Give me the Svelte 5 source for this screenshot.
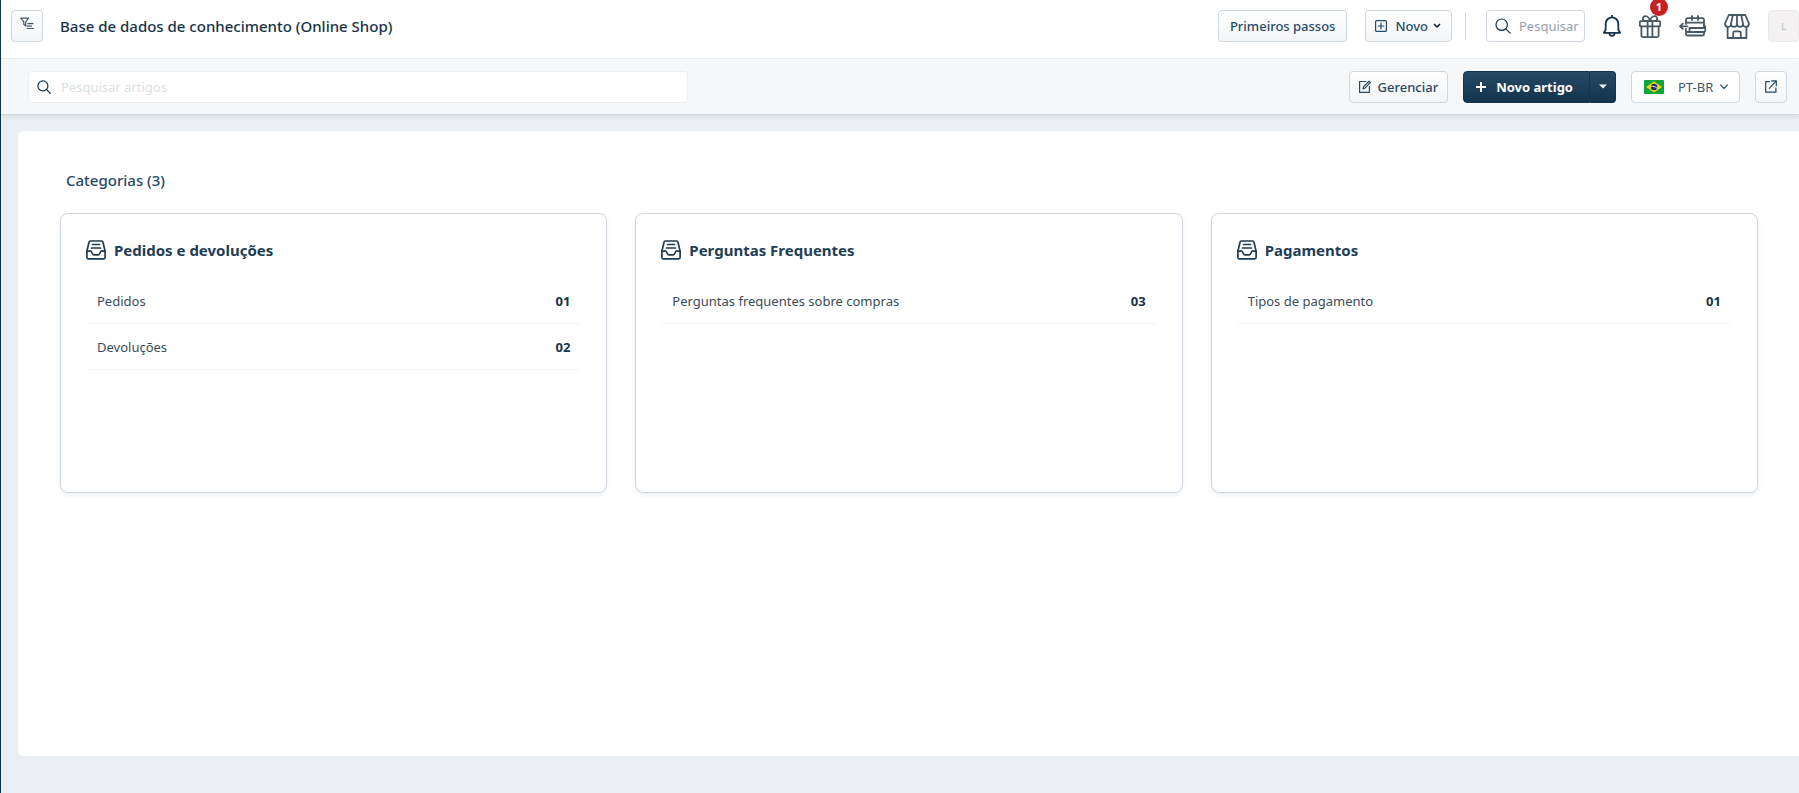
<script lang="ts">
	const categories = [
		{
			name: "Pedidos e devoluções",
			folders: [
				{ name: "Pedidos", count: 1 },
				{ name: "Devoluções", count: 2 }
			]
		},
		{
			name: "Perguntas Frequentes",
			folders: [{ name: "Perguntas frequentes sobre compras", count: 3 }]
		},
		{
			name: "Pagamentos",
			folders: [{ name: "Tipos de pagamento", count: 1 }]
		}
	];

	let search = $state("");
	let articleSearch = $state("");
	let language = $state("pt-BR");

	function pad(count: number) {
		return String(count).padStart(2, "0");
	}
</script>

<div class="app">
	<header class="header">
		<button class="btn square filter" type="button" aria-label="Filtros">
			<svg width="14" height="13" viewBox="0 0 14 13">
				<path d="M.7 1.1h7.8L5.7 4.8V9L3.8 7.6V4.8z" />
				<path d="M7.8 6.7H13M7 9.1h4.5M7 11.5h6.5" />
			</svg>
		</button>
		<h1>Base de dados de conhecimento (Online Shop)</h1>
		<div class="actions">
			<button class="btn" type="button">Primeiros passos</button>
			<button class="btn new" type="button">
				<svg width="12" height="12" viewBox="0 0 12 12">
					<rect x=".6" y=".6" width="10.8" height="10.8" rx="1" />
					<path d="M6 3.2v5.6M3.2 6h5.6" />
				</svg>
				Novo
				<svg class="caret" width="8" height="6" viewBox="0 0 8 6">
					<path d="M1.5 1.5L4 4l2.5-2.5" />
				</svg>
			</button>
			<span class="divider"></span>
			<label class="search small">
				<svg width="16" height="16" viewBox="0 0 16 16">
					<circle cx="6.7" cy="6.7" r="5.7" />
					<path d="M10.8 10.8l4.4 4.4" />
				</svg>
				<input type="text" placeholder="Pesquisar" aria-label="Pesquisar" bind:value={search} />
			</label>
			<button class="icon-btn dark" type="button" aria-label="Notificações">
				<svg width="18" height="22" viewBox="0 0 18 22">
					<path d="M9 .6v1.6M2.7 14.8V8.7a6.3 6.3 0 0 1 12.6 0v6.1l1.8 3H.9z" />
					<path d="M6.3 18.2c.4 3.6 5 3.6 5.4 0" />
				</svg>
			</button>
			<button class="icon-btn" type="button" aria-label="Novidades">
				<svg width="22" height="23" viewBox="0 0 22 23">
					<rect x=".8" y="6.2" width="20.4" height="5.2" rx="1.2" />
					<path d="M2.4 11.4v8.9a1.8 1.8 0 0 0 1.8 1.8h13.6a1.8 1.8 0 0 0 1.8-1.8v-8.9M8.6 6.2v15.9M13.4 6.2v15.9" />
					<path d="M10.6 6.2H6.4C3 6.2 3 1.2 6.2 1.2c2.6 0 4.4 2.2 4.4 5zM11.4 6.2h4.2c3.4 0 3.4-5 .2-5-2.6 0-4.4 2.2-4.4 5z" />
				</svg>
				<span class="badge">1</span>
			</button>
			<button class="icon-btn" type="button" aria-label="Agenda">
				<svg width="27" height="22" viewBox="0 0 27 22">
					<path d="M7 9V5a1.8 1.8 0 0 1 1.8-1.8h14.4A1.8 1.8 0 0 1 25 5v8M7 7.7h18M13 1v4M19 1v4" />
					<path d="M7 14v4.7a1.8 1.8 0 0 0 1.8 1.8h14.4a1.8 1.8 0 0 0 1.8-1.8V17" />
					<path d="M25 10c1.8 1.5 1.8 5.5.5 7h-18M25 13H10.5v4" />
					<path d="M8.5 11.3H1M3.8 8.7L1 11.3l2.8 2.6" />
				</svg>
			</button>
			<button class="icon-btn" type="button" aria-label="Loja">
				<svg width="26" height="25" viewBox="0 0 26 25">
					<path d="M4.8 1h16.4L25 9.500c0 4.400-5.900 4.400-6 .3 0 4.200-6 4.200-6 0 0 4.200-6 4.200-6 0-.1 4.100-6 4.100-6-.3zM8.800 1L7 9.800M13 1v8.800M17.200 1L19 9.800" />
					<path d="M3.600 13v11h18.800V13M9.200 24v-5.200a1.500 1.500 0 0 1 1.500-1.500h4.600a1.500 1.500 0 0 1 1.500 1.500V24" />
				</svg>
			</button>
			<button class="avatar" type="button">L</button>
		</div>
	</header>

	<div class="toolbar">
		<label class="search articles">
			<svg width="14" height="14" viewBox="0 0 14 14">
				<circle cx="5.9" cy="5.9" r="5" />
				<path d="M9.5 9.5l3.8 3.8" />
			</svg>
			<input
				type="text"
				placeholder="Pesquisar artigos"
				aria-label="Pesquisar artigos"
				bind:value={articleSearch}
			/>
		</label>
		<div class="tools">
			<button class="btn manage" type="button">
				<svg width="12" height="13" viewBox="0 0 12 13">
					<path d="M7 1.5H.6v10.9h9.8V6.5" />
					<path d="M4 9l.5-2.2L10 1.2l1.4 1.3-5.5 5.7z" />
				</svg>
				Gerenciar
			</button>
			<div class="split">
				<button class="primary" type="button">
					<svg width="10" height="10" viewBox="0 0 10 10">
						<path d="M5 0v10M0 5h10" />
					</svg>
					Novo artigo
				</button>
				<button class="primary more" type="button" aria-label="Mais opções">
					<svg width="8" height="5" viewBox="0 0 8 5"><path d="M0 .5h8l-4 4z" /></svg>
				</button>
			</div>
			<label class="language">
				<svg class="flag" width="20" height="14" viewBox="0 0 20 14">
					<rect width="20" height="14" rx="1" fill="#0ba53b" />
					<path d="M10 1.5L18 7l-8 5.5L2 7z" fill="#f5d713" />
					<circle cx="10" cy="7" r="3.2" fill="#1a2f73" />
					<path d="M7 6.2c2.2-.3 4.3.3 5.9 1.9" fill="none" stroke="#fff" stroke-width=".9" />
				</svg>
				<select aria-label="Idioma" bind:value={language}>
					<option value="pt-BR">PT-BR</option>
				</select>
				<svg class="caret" width="8" height="6" viewBox="0 0 8 6">
					<path d="M.7 1L4 4.5 7.3 1" />
				</svg>
			</label>
			<button class="btn square" type="button" aria-label="Abrir portal">
				<svg width="12" height="13" viewBox="0 0 12 13">
					<path d="M4.5 1.6H.7v10.6h10.2V8M6.5.9h4.8v4.8M11 1.2L4.3 8.4" />
				</svg>
			</button>
		</div>
	</div>

	<main class="panel">
		<h2>Categorias ({categories.length})</h2>
		<div class="cards">
			{#each categories as category}
				<section class="card">
					<h3>
						<svg width="20" height="20" viewBox="0 0 20 20">
							<path d="M.9 11.2L3 2.2A1.5 1.5 0 0 1 4.4 1h11.2A1.5 1.5 0 0 1 17 2.2l2.1 9v6.4a1.3 1.3 0 0 1-1.3 1.3H2.2A1.3 1.3 0 0 1 .9 17.6z" />
							<path d="M.9 11.2h4c.9 0 .9 3.6 3 3.6h4.200c2.100 0 2.100-3.600 3-3.600h4M6.600 4.500h6.800M5.500 8h9" />
						</svg>
						{category.name}
					</h3>
					<ul>
						{#each category.folders as folder}
							<li>
								<a href="#folder">{folder.name}</a>
								<span class="count">{pad(folder.count)}</span>
							</li>
						{/each}
					</ul>
				</section>
			{/each}
		</div>
	</main>
</div>

<style>
	:global(body) {
		background: #ebeef3;
	}
	.app {
		min-height: 100vh;
		box-sizing: border-box;
		border-left: 1px solid #12344d;
		font-family: "Noto Sans", "Open Sans", sans-serif;
		font-size: 13px;
		color: #183247;
	}
	svg {
		display: block;
		flex-shrink: 0;
		fill: none;
		stroke: currentColor;
		stroke-width: 1.2;
		stroke-linecap: round;
		stroke-linejoin: round;
	}
	h1,
	h2,
	h3,
	ul {
		margin: 0;
		padding: 0;
	}
	button,
	input,
	select {
		font: inherit;
		color: inherit;
	}
	button {
		cursor: pointer;
	}
	.header {
		display: flex;
		align-items: center;
		height: 52px;
		padding: 0 0 6px 10px;
		background: #fff;
		border-bottom: 1px solid #ebeff3;
	}
	h1 {
		margin-left: 17px;
		font-size: 15px;
		font-weight: 500;
		line-height: 20px;
	}
	.actions {
		display: flex;
		align-items: center;
		gap: 18px;
		margin-left: auto;
	}
	.btn {
		display: flex;
		align-items: center;
		justify-content: center;
		box-sizing: border-box;
		height: 32px;
		padding: 0 11px;
		border: 1px solid #cfd7df;
		border-radius: 4px;
		background: linear-gradient(#fff, #f3f5f7);
		color: #264966;
		font-weight: 500;
	}
	.square {
		width: 32px;
		padding: 0;
	}
	.filter {
		padding-bottom: 6px;
		color: #475867;
	}
	.new {
		gap: 8px;
		padding: 0 10px 0 9px;
	}
	.new .caret {
		margin-left: -3px;
		color: #12232f;
		stroke-width: 1.7;
	}
	.divider {
		width: 1px;
		height: 27px;
		margin: 0 2px 0 -5px;
		background: #cfd7df;
	}
	.search {
		display: flex;
		align-items: center;
		gap: 8px;
		box-sizing: border-box;
		height: 32px;
		padding: 0 8px;
		border: 1px solid #cfd7df;
		border-radius: 4px;
		background: #fff;
	}
	.search input {
		width: 100%;
		min-width: 0;
		padding: 0;
		border: 0;
		outline: 0;
		background: none;
	}
	.search input::placeholder {
		color: #92a2b1;
		opacity: 1;
	}
	.small {
		width: 99px;
		padding-right: 0;
	}
	.icon-btn {
		position: relative;
		padding: 0;
		border: 0;
		background: none;
		color: #475867;
	}
	.icon-btn svg {
		stroke-width: 1.8;
	}
	.dark {
		color: #12344d;
	}
	.badge {
		position: absolute;
		top: -17px;
		right: -7px;
		width: 18px;
		height: 18px;
		border-radius: 50%;
		background: #c82124;
		color: #fff;
		font-size: 11px;
		font-weight: 700;
		line-height: 18px;
		text-align: center;
	}
	.avatar {
		width: 31px;
		height: 32px;
		padding: 0;
		border: 1px solid #ebe9ea;
		border-radius: 4px;
		background: #f3f1f2;
		color: #a9bcc0;
		font-size: 9px;
	}
	.toolbar {
		display: flex;
		align-items: center;
		justify-content: space-between;
		position: relative;
		height: 55px;
		padding: 0 12px 0 27px;
		background: #f5f7f9;
		border-bottom: 1px solid #cfd7df;
		box-shadow: 0 2px 4px rgba(24, 50, 71, 0.08);
	}
	.articles {
		width: 37.5%;
		gap: 10px;
		border-color: #ebeff3;
	}
	.articles input::placeholder {
		color: #dadfe3;
	}
	.tools {
		display: flex;
		align-items: center;
		gap: 15px;
	}
	.manage {
		gap: 7px;
		padding: 0 9px;
	}
	.split {
		display: flex;
	}
	.primary {
		display: flex;
		align-items: center;
		justify-content: center;
		gap: 10px;
		box-sizing: border-box;
		height: 32px;
		padding: 0 16px 0 12px;
		border: 1px solid #12344d;
		border-radius: 4px 0 0 4px;
		background: linear-gradient(#264966, #12344d);
		color: #fff;
		font-weight: 700;
	}
	.primary svg {
		stroke-width: 2;
		stroke-linecap: butt;
	}
	.more {
		width: 26px;
		padding: 0;
		border-left: 0;
		border-radius: 0 4px 4px 0;
	}
	.more svg {
		fill: currentColor;
		stroke: none;
	}
	.language {
		display: flex;
		align-items: center;
		box-sizing: border-box;
		height: 32px;
		padding: 0 11px 0 12px;
		border: 1px solid #cfd7df;
		border-radius: 4px;
		background: #fff;
		color: #475867;
	}
	.flag {
		margin-right: 14px;
		stroke: none;
	}
	.language select {
		padding: 0 6px 0 0;
		border: 0;
		outline: 0;
		appearance: none;
		background: none;
	}
	.panel {
		min-height: 586px;
		margin: 16px 0 0 17px;
		padding: 39px 41px 0 42px;
		border-radius: 5px 0 0 5px;
		background: #fff;
	}
	h2 {
		margin: 0 0 23px 6px;
		font-size: 15px;
		font-weight: 500;
		line-height: 20px;
		color: #264966;
	}
	.cards {
		display: grid;
		grid-template-columns: repeat(3, 1fr);
		gap: 28px;
	}
	.card {
		box-sizing: border-box;
		min-height: 280px;
		padding: 24px 25px;
		border: 1px solid #cfd7df;
		border-radius: 8px;
		box-shadow: 0 2px 4px rgba(24, 50, 71, 0.08);
	}
	h3 {
		display: flex;
		align-items: center;
		gap: 8px;
		font-size: 15px;
		font-weight: 700;
		line-height: 24px;
		color: #1e3d56;
	}
	h3 svg {
		stroke-width: 1.7;
	}
	ul {
		margin-top: 16px;
		list-style: none;
	}
	li {
		display: flex;
		align-items: center;
		justify-content: space-between;
		height: 45px;
		padding: 0 11px;
		border-bottom: 1px solid #f3f5f7;
		border-radius: 4px;
	}
	a {
		color: #3a4c5b;
		text-decoration: none;
	}
	.count {
		font-weight: 700;
	}
</style>
